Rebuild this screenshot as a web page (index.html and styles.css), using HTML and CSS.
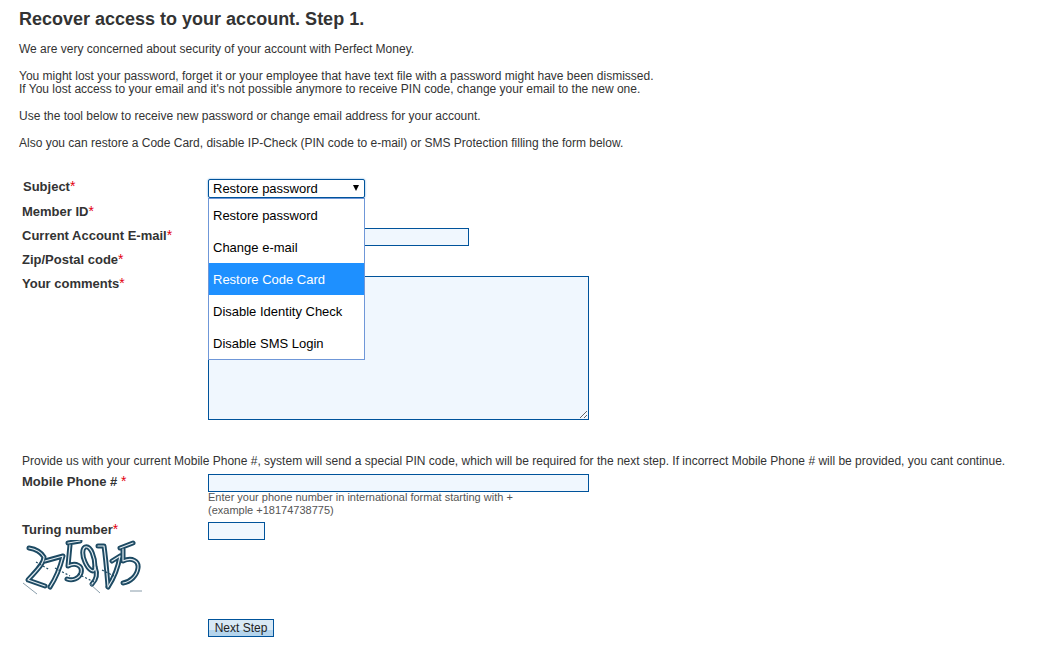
FILE: index.html
```html
<!DOCTYPE html>
<html lang="en">
<head>
<meta charset="utf-8">
<title>Recover access to your account</title>
<link rel="stylesheet" href="styles.css">
</head>
<body>
<main class="page">
  <h1 class="title">Recover access to your account. Step 1.</h1>
  <p class="text">We are very concerned about security of your account with Perfect Money.</p>
  <p class="text">You might lost your password, forget it or your employee that have text file with a password might have been dismissed.<br>If You lost access to your email and it's not possible anymore to receive PIN code, change your email to the new one.</p>
  <p class="text">Use the tool below to receive new password or change email address for your account.</p>
  <p class="text">Also you can restore a Code Card, disable IP-Check (PIN code to e-mail) or SMS Protection filling the form below.</p>

  <form class="form">
    <div class="row row-subject">
      <label class="label label-subject">Subject<span class="req">*</span></label>
      <div class="select-wrap">
        <div class="select">Restore password<span class="arrow"></span></div>
        <ul class="menu">
          <li class="option">Restore password</li>
          <li class="option">Change e-mail</li>
          <li class="option option-active">Restore Code Card</li>
          <li class="option">Disable Identity Check</li>
          <li class="option">Disable SMS Login</li>
        </ul>
      </div>
    </div>
    <div class="row">
      <label class="label">Member ID<span class="req">*</span></label>
      <input class="input input-short" type="text">
    </div>
    <div class="row">
      <label class="label">Current Account E-mail<span class="req">*</span></label>
      <input class="input input-mid" type="text">
    </div>
    <div class="row">
      <label class="label">Zip/Postal code<span class="req">*</span></label>
      <input class="input input-short" type="text">
    </div>
    <div class="row">
      <label class="label">Your comments<span class="req">*</span></label>
      <textarea class="input area"></textarea>
    </div>
    <p class="note">Provide us with your current Mobile Phone #, system will send a special PIN code, which will be required for the next step. If incorrect Mobile Phone # will be provided, you cant continue.</p>
    <div class="row row-phone">
      <label class="label">Mobile Phone # <span class="req">*</span></label>
      <div>
        <input class="input input-wide" type="text">
        <div class="hint">Enter your phone number in international format starting with +<br>(example +18174738775)</div>
      </div>
    </div>
    <div class="row row-turing">
      <div class="turing">
        <label class="label">Turing number<span class="req">*</span></label>
        <svg class="captcha" width="120" height="56" viewBox="0 0 120 56" aria-hidden="true">
          <defs>
            <g id="glyphs">
              <path d="M7 8 C13 9 19 12 22 17 C22 24 13 32 6 40 L23 46"/>
              <path d="M23 21 L41 16 C38 28 34 38 28 47"/>
              <path d="M46 3 L58 1 M48 5 L46 26 C54 22 61 26 59 33 C57 39 50 41 45 39"/>
              <path d="M63 7 C69 5 73 18 73 27 C73 34 67 31 63 22 C60 15 60 9 63 7 Z"/>
              <path d="M73 27 C75 32 76 38 70 44"/>
              <path d="M76 6 L82 6 C84 20 85 34 86 46"/>
              <path d="M90 21 L98 16 C96 28 92 38 86 47"/>
              <path d="M98 8 L111 3 M101 9 L101 21 C110 17 117 21 116 28 C115 36 108 42 101 43"/>
            </g>
          </defs>
          <g class="cap-outer"><use href="#glyphs"/></g>
          <g class="cap-inner"><use href="#glyphs"/></g>
          <path class="cap-noise" d="M33 28 L48 36 M56 34 L72 42 M80 30 L92 36 M14 22 L28 30"/>
          <path class="cap-line" d="M1 43 L15 54 M68 44 L78 53 M108 51 L120 51"/>
        </svg>
      </div>
      <input class="input input-tiny" type="text">
    </div>
    <div class="actions">
      <button class="button" type="button">Next Step</button>
    </div>
  </form>
</main>
</body>
</html>
```

FILE: styles.css
```css
* { box-sizing: border-box; }
html, body { margin: 0; padding: 0; background: #fff; }
body {
  font-family: "Liberation Sans", Arial, sans-serif;
  font-size: 12px;
  line-height: 13px;
  color: #333;
  overflow: hidden;
}
.page { padding: 9px 0 0 19px; }
.title { margin: 0 0 13px; font-size: 18px; line-height: 21px; font-weight: bold; color: #333; }
.text { margin: 0 0 14px; }
.form { margin: 29px 0 0 3px; }
.row { display: flex; align-items: flex-start; min-height: 24px; }
.label {
  display: block;
  width: 186px;
  flex: none;
  font-size: 13px;
  line-height: 14px;
  font-weight: bold;
  color: #333;
}
.label-subject { padding-left: 1px; }
.req { color: #e3000f; font-weight: normal; font-size: 14px; }
.row-subject { min-height: 25px; }
.input {
  display: block;
  height: 18px;
  margin: 0;
  padding: 0 2px;
  background: #f0f7fe;
  border: 1px solid #00539b;
  border-radius: 0;
}
.input-short { width: 157px; }
.input-mid { width: 261px; }
.input-wide { width: 381px; }
.input-tiny { width: 57px; }
.area { width: 381px; height: 144px; resize: both; }
.select-wrap { position: relative; width: 157px; }
.select {
  position: relative;
  height: 19px;
  padding-left: 4px;
  font-size: 13px;
  line-height: 18px;
  color: #000;
  background: #fff;
  border: 1px solid #00539b;
  border-radius: 2px;
  box-shadow: 0 0 2px #5b9dd9;
}
.arrow {
  position: absolute;
  right: 5px;
  top: 5px;
  width: 0;
  height: 0;
  border-left: 3.5px solid transparent;
  border-right: 3.5px solid transparent;
  border-top: 6px solid #000;
}
.menu {
  position: absolute;
  z-index: 2;
  left: 0;
  top: 19px;
  width: 157px;
  margin: 0;
  padding: 0;
  list-style: none;
  background: #fff;
  border: 1px solid #6f97d8;
}
.option {
  height: 32px;
  padding-left: 4px;
  font-size: 13px;
  line-height: 33px;
  color: #000;
}
.option-active { background: #1e90ff; color: #fff; }
.note { margin: 34px 0 0; line-height: 14px; }
.row-phone { margin-top: 6px; min-height: 48px; }
.hint { margin-top: -1px; font-size: 11px; line-height: 13px; color: #555; }
.row-turing { min-height: 97px; }
.turing { width: 186px; flex: none; }
.captcha { display: block; margin-top: 3px; }
.cap-outer { fill: none; stroke: #1d4a63; stroke-width: 5; stroke-linecap: round; stroke-linejoin: round; }
.cap-inner { fill: none; stroke: #e4edf2; stroke-width: 1.2; stroke-linecap: round; stroke-linejoin: round; }
.cap-noise { fill: none; stroke: #1d4a63; stroke-width: 1.2; stroke-dasharray: 2 2; }
.cap-line { fill: none; stroke: #6b8494; stroke-width: 0.8; }
.actions { padding-left: 186px; }
.button {
  display: block;
  width: 66px;
  height: 18px;
  padding: 0;
  font-family: "Liberation Sans", Arial, sans-serif;
  font-size: 12px;
  line-height: 16px;
  color: #222;
  background: linear-gradient(#d9e9f5 60%, #b4d4ec 60%);
  border: 1px solid #00539b;
  border-radius: 0;
}
```
